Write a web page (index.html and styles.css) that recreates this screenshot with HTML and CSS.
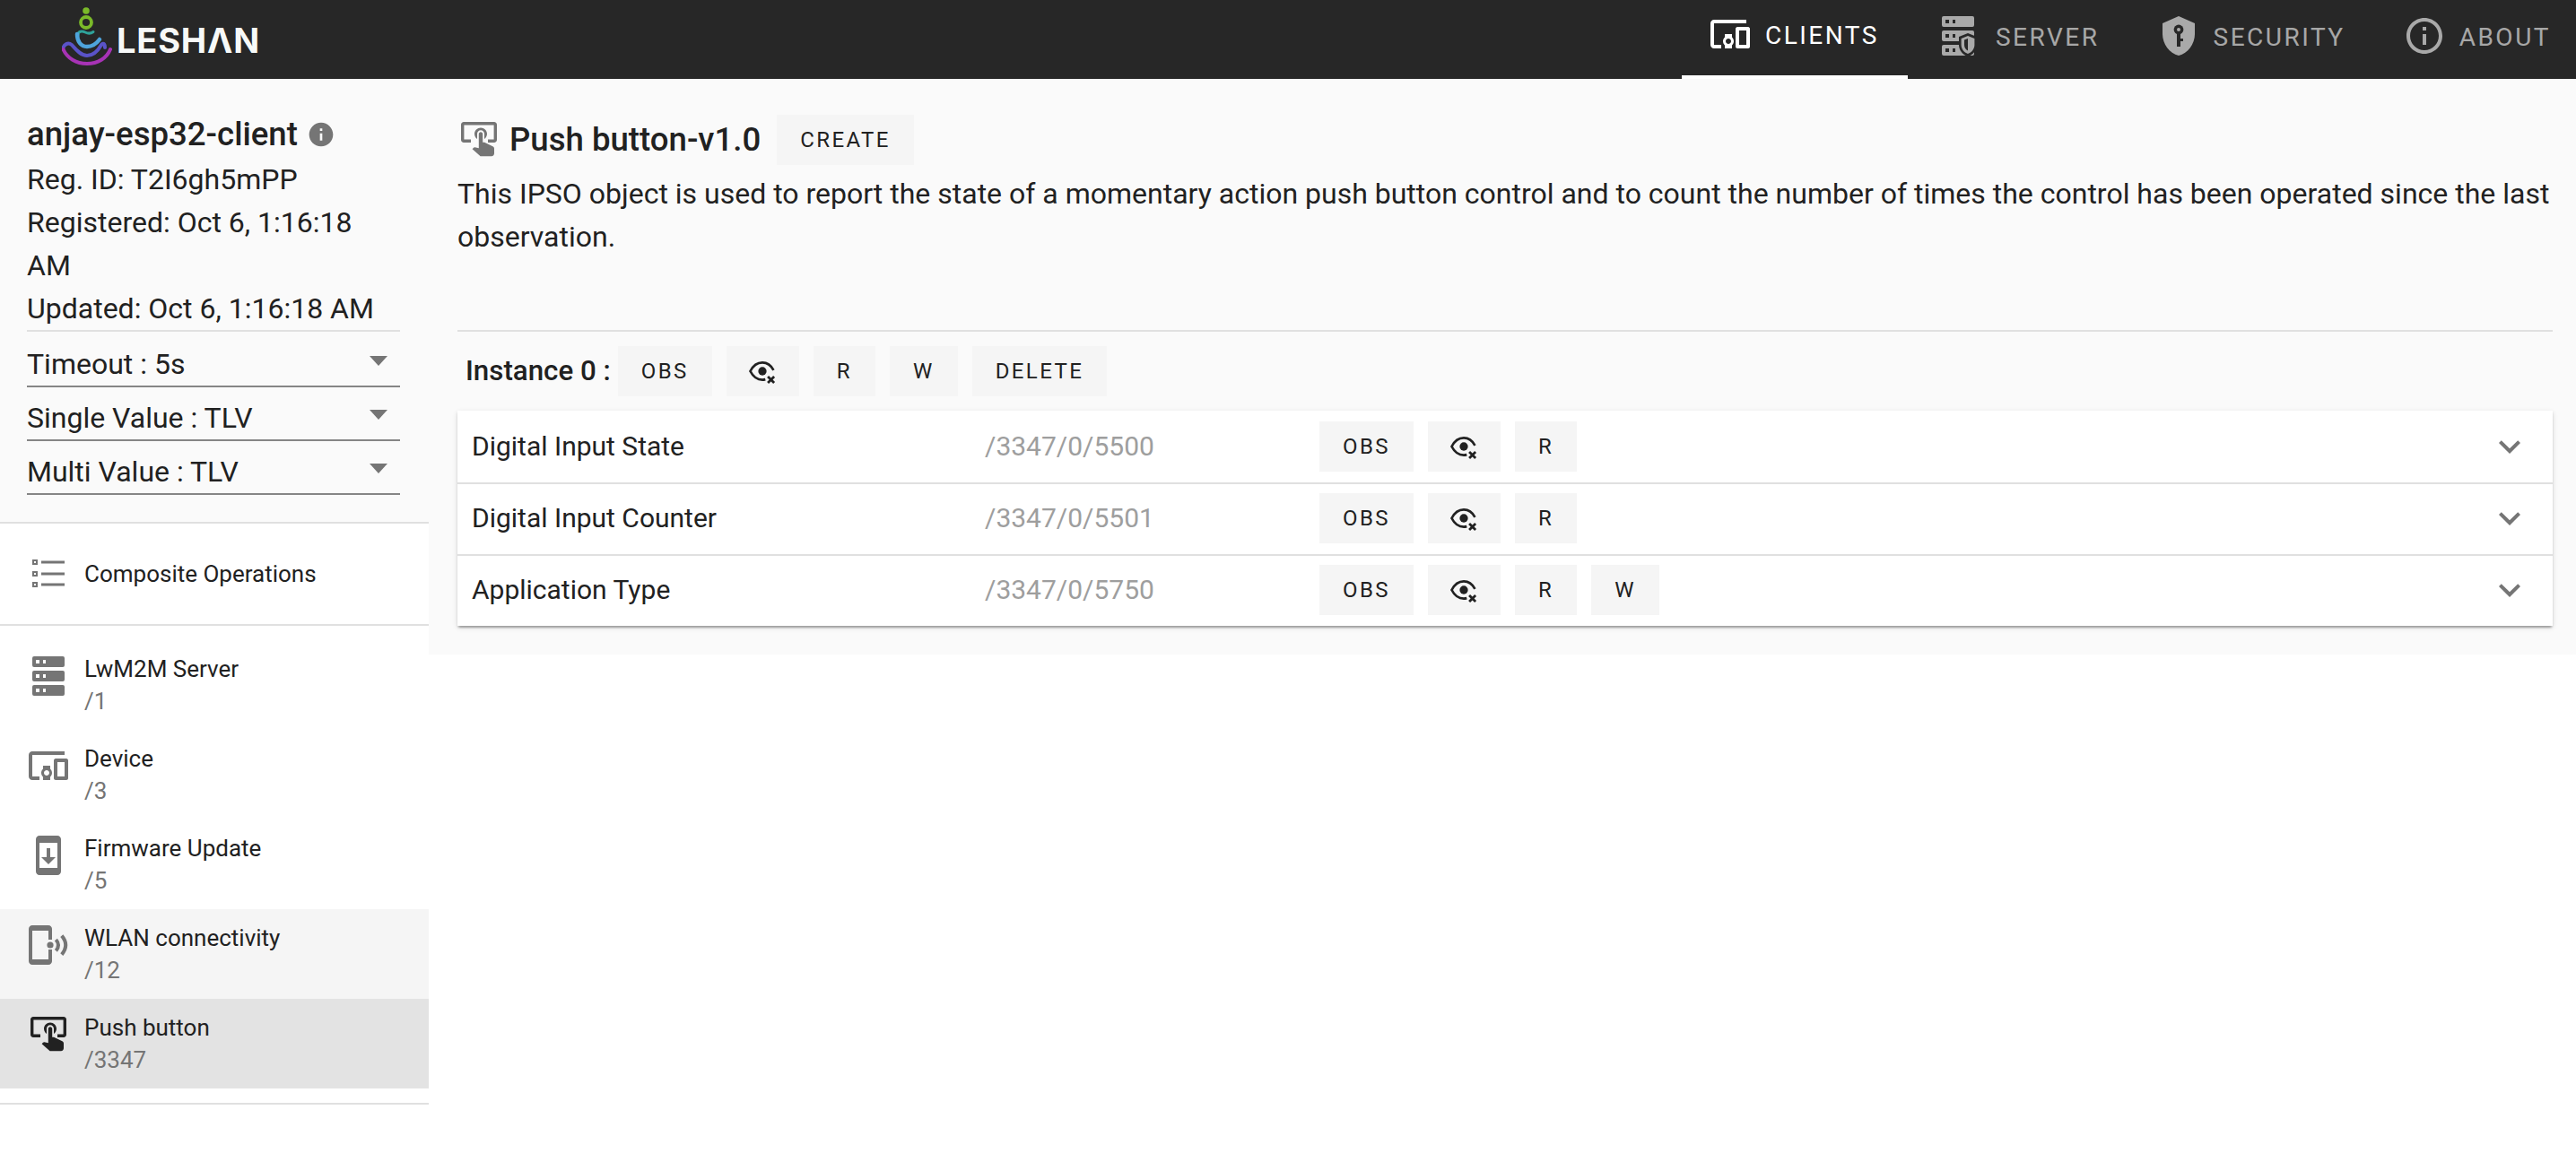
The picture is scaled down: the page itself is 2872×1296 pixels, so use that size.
FILE: index.html
```html
<!DOCTYPE html>
<html lang="en">
<head>
    <meta charset="UTF-8">
    <title>Leshan</title>
    <link rel="stylesheet" href="styles.css">
</head>
<body>
    <svg class="sprite" width="0" height="0">
        <defs>
            <symbol id="i-devices" viewBox="0 0 24 24"><path d="M3 6h18V4H3c-1.1 0-2 .9-2 2v12c0 1.1.9 2 2 2h4v-2H3V6zm10 6H9v1.78c-.61.55-1 1.33-1 2.22s.39 1.67 1 2.22V20h4v-1.78c.61-.55 1-1.34 1-2.22s-.39-1.67-1-2.22V12zm-2 5.5c-.83 0-1.5-.67-1.5-1.5s.67-1.5 1.5-1.5 1.5.67 1.5 1.5-.67 1.5-1.5 1.5zM22 8h-6c-.5 0-1 .5-1 1v10c0 .5.5 1 1 1h6c.5 0 1-.5 1-1V9c0-.5-.5-1-1-1zm-1 10h-4v-8h4v8z"/></symbol>
            <symbol id="i-storage" viewBox="0 0 24 24"><path fill-rule="evenodd" d="M4 1h16a1 1 0 0 1 1 1v4a1 1 0 0 1-1 1H4a1 1 0 0 1-1-1V2a1 1 0 0 1 1-1zm1 2v2h2V3zm4 0v2h1.500V3zM4 9h16a1 1 0 0 1 1 1v4a1 1 0 0 1-1 1H4a1 1 0 0 1-1-1v-4a1 1 0 0 1 1-1zm1 2v2h2v-2zm4 0v2h1.500v-2zM4 17h16a1 1 0 0 1 1 1v4a1 1 0 0 1-1 1H4a1 1 0 0 1-1-1v-4a1 1 0 0 1 1-1zm1 2v2h2v-2zm4 0v2h1.500v-2z"/></symbol>
            <symbol id="i-update" viewBox="0 0 24 24"><path d="M17 1.010 7 1c-1.100 0-2 .9-2 2v18c0 1.100.9 2 2 2h10c1.100 0 2-.9 2-2V3c0-1.100-.9-1.990-2-1.990zM17 19H7V5h10v14zm-1-6h-3V8h-2v5H8l4 4 4-4z"/></symbol>
            <symbol id="i-wlan" viewBox="0 0 24 24">
                <path d="M3 1h9c1.100 0 2 .9 2 2v6h-2V4H3v16h9v-5.500h2V21c0 1.100-.9 2-2 2H3c-1.100 0-2-.9-2-2V3c0-1.100.9-2 2-2z"/>
                <circle cx="13" cy="12" r="1.800"/>
                <path class="wave" d="M16.200 9c1.700 2 1.700 4.200 0 6.200"/>
                <path class="wave" d="M19.400 6.800c2.900 3.400 2.900 7 0 10.500"/>
            </symbol>
            <symbol id="i-touch" viewBox="0 0 24 24">
                <path d="M3.500 2h17c.8 0 1.500.7 1.500 1.500V12c0 .8-.7 1.500-1.500 1.500H17v-1.700h3.300V3.700H3.700v8.100h3.800v1.700h-4c-.8 0-1.500-.7-1.500-1.500V3.500C2 2.700 2.700 2 3.500 2z"/>
                <g transform="translate(1.500 -0.800)">
                    <path d="M9.500 12.300c-.9-.7-1.500-1.700-1.500-2.900C8 7.500 9.600 6 11.500 6S15 7.500 15 9.400c0 1.200-.6 2.200-1.500 2.900V9.400c0-1.100-.9-2-2-2s-2 .9-2 2z"/>
                    <path d="M10.400 9.500c0-.6.500-1.100 1.100-1.100s1.100.5 1.100 1.100v4.700h.8c.150 0 .3 0 .4.100l4.400 2.100c.5.200.8.700.8 1.300v2.700c-.1.9-.7 1.500-1.500 1.500h-5.700c-.4 0-.7-.1-.9-.4L6.800 17.900l.7-.7c.2-.2.4-.3.7-.3l2.200.5z"/>
                </g>
            </symbol>
            <symbol id="i-eye" viewBox="0 0 24 24"><path class="eye-line" d="M20.300 11.200C18.400 7.700 15.400 5.600 12 5.600c-3.700 0-7 2.500-9 6.400 2 3.900 5.300 6.400 9 6.400.7 0 1.500-.1 2.200-.3"/><circle cx="12" cy="12" r="3.100"/><path d="M16.700 15.300l1.700 1.700 1.700-1.700 1.300 1.300-1.700 1.700 1.700 1.700-1.300 1.300-1.700-1.700-1.700 1.700-1.300-1.300 1.700-1.700-1.700-1.700z"/></symbol>
            <symbol id="i-expand" viewBox="0 0 24 24"><path d="M16.590 8.590 12 13.170 7.410 8.590 6 10l6 6 6-6z"/></symbol>
        </defs>
    </svg>

    <header class="topbar">
        <div class="logo">
            <svg class="logo-mark" width="56" height="66" viewBox="0 0 56 66">
                <circle cx="27" cy="5" r="3.800" fill="#7ab929"/>
                <circle cx="27" cy="18" r="6" fill="none" stroke="#7ab929" stroke-width="3.800"/>
                <path d="M18 32c0-4 4-5 8-3s7 1 9-.5" fill="none" stroke="#2fa39a" stroke-width="3" stroke-linecap="round"/>
                <path d="M17 31C17 39 21 45 28 45c7 0 11-4 14-8" fill="none" stroke="#4ea4dc" stroke-width="4.500" stroke-linecap="round"/>
                <path d="M1 48C2 42 7 40 11 43c6 7 11 12 17 12s12-5 16-12c3-3 4 0 4 3" fill="none" stroke="#5a53c8" stroke-width="4" stroke-linecap="round"/>
                <path d="M1.500 48C6 58 16 64 28 64s22-6 26-16" fill="none" stroke="#a733b5" stroke-width="4" stroke-linecap="round"/>
            </svg>
            <span class="logo-text">LESHΛN</span>
        </div>
        <nav class="tabs">
            <a class="tab tab-active"><svg class="icon"><use href="#i-devices"/></svg>CLIENTS</a>
            <a class="tab tab-server">
                <svg class="icon" viewBox="0 0 24 24">
                    <use href="#i-storage" width="24" height="24"/>
                    <path class="tab-cut" d="M17.500 10.500l5 2v4.500c0 3-2.100 5.600-5 6.500-2.900-.9-5-3.500-5-6.500v-4.500z"/>
                    <path d="M17.500 12l3.700 1.500v3.500c0 2.300-1.600 4.300-3.700 5-2.100-.7-3.700-2.700-3.700-5v-3.500zm0 1.500l-2 .8V17c0 1.500 .9 2.800 2 3.300z"/>
                </svg>SERVER</a>
            <a class="tab">
                <svg class="icon" viewBox="0 0 24 24">
                    <path d="M12 1 3 5v6c0 5.550 3.840 10.740 9 12 5.160-1.260 9-6.450 9-12V5z"/>
                    <circle class="tab-cut" cx="12" cy="8.500" r="2.700"/>
                    <path class="tab-cut" d="M11 10h2v8h-2zM13 13.500h1.500V15H13z"/>
                    <circle cx="12" cy="8.500" r="1"/>
                </svg>SECURITY</a>
            <a class="tab"><svg class="icon" viewBox="0 0 24 24"><path d="M11 7h2v2h-2zm0 4h2v6h-2zm1-9C6.480 2 2 6.480 2 12s4.480 10 10 10 10-4.480 10-10S17.520 2 12 2zm0 18c-4.410 0-8-3.590-8-8s3.590-8 8-8 8 3.590 8 8-3.590 8-8 8z"/></svg>ABOUT</a>
        </nav>
    </header>

    <div class="page">
        <aside class="sidebar">
            <section class="client">
                <div class="client-name">anjay-esp32-client
                    <svg class="info-icon" viewBox="0 0 24 24"><path d="M12 2C6.480 2 2 6.480 2 12s4.480 10 10 10 10-4.480 10-10S17.520 2 12 2zm1 15h-2v-6h2v6zm0-8h-2V7h2v2z"/></svg>
                </div>
                <div class="client-line">Reg. ID: T2I6gh5mPP</div>
                <div class="client-line">Registered: Oct 6, 1:16:18 AM</div>
                <div class="client-line client-last">Updated: Oct 6, 1:16:18 AM</div>
                <div class="select">Timeout : 5s<span class="caret"></span></div>
                <div class="select">Single Value : TLV<span class="caret"></span></div>
                <div class="select">Multi Value : TLV<span class="caret"></span></div>
            </section>

            <a class="composite">
                <svg class="icon" viewBox="0 0 24 24">
                    <path fill-rule="evenodd" d="M3 4h3v3H3zm1 1v1h1V5zM3 10.500h3v3H3zm1 1v1h1v-1zM3 16.500h3v3H3zm1 1v1h1v-1zM8 4.750h13v1.500H8zM8 11.250h13v1.500H8zM8 17.250h13v1.500H8z"/>
                </svg>
                <span class="nav-title">Composite Operations</span>
            </a>

            <ul class="objects">
                <li class="object"><svg class="icon"><use href="#i-storage"/></svg><div><div class="nav-title">LwM2M Server</div><div class="nav-sub">/1</div></div></li>
                <li class="object"><svg class="icon"><use href="#i-devices"/></svg><div><div class="nav-title">Device</div><div class="nav-sub">/3</div></div></li>
                <li class="object"><svg class="icon"><use href="#i-update"/></svg><div><div class="nav-title">Firmware Update</div><div class="nav-sub">/5</div></div></li>
                <li class="object object-hover"><svg class="icon"><use href="#i-wlan"/></svg><div><div class="nav-title">WLAN connectivity</div><div class="nav-sub">/12</div></div></li>
                <li class="object object-active"><svg class="icon"><use href="#i-touch"/></svg><div><div class="nav-title">Push button</div><div class="nav-sub">/3347</div></div></li>
            </ul>
        </aside>

        <main class="content">
            <div class="object-head">
                <svg class="icon"><use href="#i-touch"/></svg>
                <h1 class="object-title">Push button-v1.0</h1>
                <button class="btn">CREATE</button>
            </div>
            <p class="description">This IPSO object is used to report the state of a momentary action push button control and to count the number of times the control has been operated since the last observation.</p>

            <div class="instance-head">
                <span class="instance-title">Instance 0 :</span>
                <button class="btn">OBS</button>
                <button class="btn btn-eye"><svg class="eye"><use href="#i-eye"/></svg></button>
                <button class="btn">R</button>
                <button class="btn">W</button>
                <button class="btn">DELETE</button>
            </div>

            <div class="resources">
                <div class="resource">
                    <span class="res-name">Digital Input State</span>
                    <span class="res-path">/3347/0/5500</span>
                    <div class="res-actions">
                        <button class="btn">OBS</button>
                        <button class="btn btn-eye"><svg class="eye"><use href="#i-eye"/></svg></button>
                        <button class="btn">R</button>
                    </div>
                    <svg class="icon expand"><use href="#i-expand"/></svg>
                </div>
                <div class="resource">
                    <span class="res-name">Digital Input Counter</span>
                    <span class="res-path">/3347/0/5501</span>
                    <div class="res-actions">
                        <button class="btn">OBS</button>
                        <button class="btn btn-eye"><svg class="eye"><use href="#i-eye"/></svg></button>
                        <button class="btn">R</button>
                    </div>
                    <svg class="icon expand"><use href="#i-expand"/></svg>
                </div>
                <div class="resource">
                    <span class="res-name">Application Type</span>
                    <span class="res-path">/3347/0/5750</span>
                    <div class="res-actions">
                        <button class="btn">OBS</button>
                        <button class="btn btn-eye"><svg class="eye"><use href="#i-eye"/></svg></button>
                        <button class="btn">R</button>
                        <button class="btn">W</button>
                    </div>
                    <svg class="icon expand"><use href="#i-expand"/></svg>
                </div>
            </div>
        </main>
    </div>
</body>
</html>
```

FILE: styles.css
```css
* {
    box-sizing: border-box;
}
html, body {
    margin: 0;
    height: 100%;
    overflow: hidden;
}
body {
    font-family: Roboto, "Liberation Sans", sans-serif;
    font-size: 32px;
    line-height: 48px;
    color: #212121;
    background-color: white;
}
.sprite {
    position: absolute;
}
.icon {
    width: 48px;
    height: 48px;
    flex: none;
    fill: #757575;
}
.wave {
    fill: none;
    stroke: #757575;
    stroke-width: 2;
}

/* top bar */
.topbar {
    height: 88px;
    display: flex;
    justify-content: space-between;
    background-color: #272727;
}
.logo {
    display: flex;
    align-items: center;
    padding-left: 69px;
}
.logo-mark {
    flex: none;
    margin-bottom: 8px;
}
.logo-text {
    margin-left: 5px;
    padding-top: 2px;
    font-family: Inter, Roboto, sans-serif;
    font-size: 38px;
    font-weight: 700;
    letter-spacing: 0.800px;
    color: #f7f9f8;
}
.tabs {
    display: flex;
}
.tab {
    display: flex;
    align-items: center;
    padding: 0 32px 4px 32px;
    font-size: 28px;
    letter-spacing: 2.500px;
    color: rgba(255, 255, 255, 0.6);
}
.tab:last-child {
    padding-right: 28px;
}
.tab .icon {
    margin: 0 15px 4px 0;
    fill: #a9a9a9;
}
.tab-server .icon {
    margin-right: 18px;
}
.tab-cut {
    fill: #272727;
}
.tab-active {
    padding-left: 30px;
    color: white;
    border-bottom: 4px solid white;
}
.tab-active .icon {
    fill: white;
}

.page {
    display: flex;
    align-items: flex-start;
}

/* left column */
.sidebar {
    width: 478px;
    flex: none;
}
.client {
    height: 496px;
    padding: 36px 32px 0 30px;
    background-color: #fafafa;
    border-bottom: 2px solid #e0e0e0;
}
.client-name {
    display: flex;
    align-items: center;
    height: 52px;
    font-size: 36.600px;
    font-weight: 500;
}
.info-icon {
    width: 32px;
    height: 32px;
    margin-left: 10px;
    fill: #757575;
}
.client-last {
    height: 50px;
    margin-bottom: 2px;
    border-bottom: 2px solid #e0e0e0;
}
.select {
    position: relative;
    height: 60px;
    padding-top: 10px;
    border-bottom: 2px solid #858585;
}
.caret {
    position: absolute;
    right: 14px;
    top: 25px;
    border-left: 10px solid transparent;
    border-right: 10px solid transparent;
    border-top: 11px solid #757575;
}
.composite {
    display: flex;
    height: 114px;
    padding: 32px 0 0 30px;
    border-bottom: 2px solid #e0e0e0;
}
.nav-title {
    font-size: 26px;
    line-height: 36px;
    color: #212121;
}
.composite .nav-title {
    margin-left: 16px;
    line-height: 48px;
}
.nav-sub {
    font-size: 26px;
    line-height: 36px;
    color: #757575;
}
.objects {
    list-style: none;
    margin: 0;
    padding: 16px 0;
    border-bottom: 2px solid #e0e0e0;
}
.object {
    display: flex;
    gap: 16px;
    height: 100px;
    padding: 14px 0 0 30px;
}
.object .icon {
    margin-top: 2px;
}
.object-hover {
    background-color: #f5f5f5;
}
.object-active {
    background-color: #e3e3e3;
}
.object-active .icon {
    fill: #212121;
}

/* main column */
.content {
    flex: 1;
    padding: 40px 26px 32px 32px;
    background-color: #fafafa;
}
.object-head {
    display: flex;
    align-items: center;
    height: 56px;
}
.object-title {
    margin: 0 18px 0 10px;
    font-size: 36.600px;
    font-weight: 500;
    line-height: 52px;
}
.btn {
    display: inline-flex;
    align-items: center;
    justify-content: center;
    height: 56px;
    padding: 0 26px;
    border: none;
    border-radius: 0;
    background-color: #f5f5f5;
    color: #212121;
    font-family: Roboto, "Liberation Sans", sans-serif;
    font-size: 24px;
    letter-spacing: 2.400px;
}
.btn-eye {
    width: 81px;
    padding: 0;
}
.eye {
    width: 36px;
    height: 36px;
    fill: #212121;
}
.eye-line {
    fill: none;
    stroke: #212121;
    stroke-width: 1.800;
}
.description {
    margin: 8px 0 0;
}
.instance-head {
    display: flex;
    align-items: center;
    gap: 16px;
    margin-top: 80px;
    padding-top: 16px;
    padding-left: 9px;
    border-top: 2px solid #e0e0e0;
}
.instance-title {
    margin-right: -8px;
    font-size: 31.300px;
    font-weight: 500;
}
.resources {
    margin-top: 16px;
    background-color: white;
    box-shadow: 0 4px 2px -2px rgba(0, 0, 0, 0.2), 0 2px 2px rgba(0, 0, 0, 0.14), 0 2px 6px rgba(0, 0, 0, 0.12);
}
.resource {
    display: flex;
    align-items: center;
    height: 80px;
    padding: 0 24px 2px 16px;
    border-bottom: 2px solid #e0e0e0;
}
.resource:first-child {
    height: 82px;
    padding-bottom: 0;
}
.resource:last-child {
    height: 78px;
    border-bottom: none;
}
.res-name {
    width: 572px;
    font-size: 30px;
}
.res-path {
    width: 373px;
    font-size: 30px;
    color: #9e9e9e;
}
.res-actions {
    flex: 1;
    display: flex;
    gap: 16px;
}
```
